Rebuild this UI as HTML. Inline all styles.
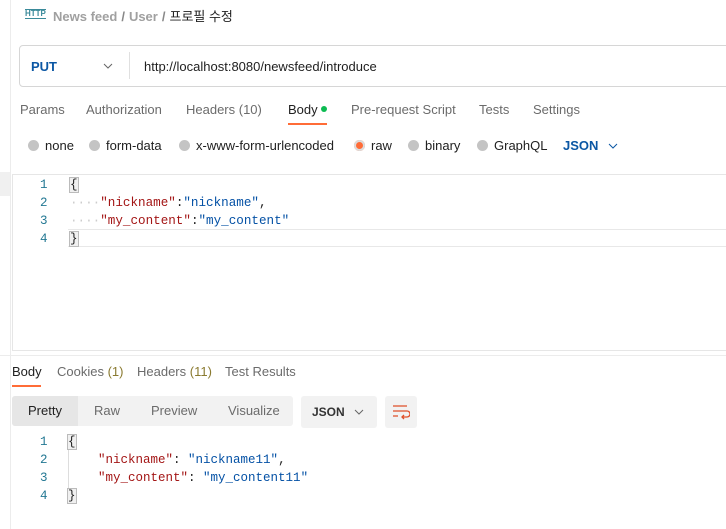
<!DOCTYPE html><html><head><style>
body{margin:0;width:726px;height:529px;background:#fff;font-family:"Liberation Sans","Noto Sans CJK KR",sans-serif;font-size:13px;color:#212121;position:relative;overflow:hidden}
.a{position:absolute;white-space:nowrap}
.g{color:#6b6b6b}
.mono{font-family:"Liberation Mono",monospace;font-size:12.5px}
.k{color:#a31515}.s{color:#0451a5}
.dot{display:inline-block;width:11px;height:11px;border-radius:50%;background:#c4c4c4;vertical-align:-1px;margin-right:6px}
.sl{color:#888;margin:0 4px}
</style></head><body>
<div class="a" style="left:0;top:0;width:10px;height:529px;border-right:1px solid #ececec"></div>
<div class="a" style="left:25px;top:9px;font-size:8px;color:#3a8a9a;font-weight:bold;border-top:1px solid #3a8a9a;border-bottom:1px solid #3a8a9a;line-height:8px">HTTP</div>
<div class="a" style="left:53px;top:6px;font-size:13px;font-weight:bold"><span style="color:#a0a0a0">News feed</span><span class="sl">/</span><span style="color:#a0a0a0">User</span><span class="sl">/</span><span style="font-weight:normal;color:#212121">프로필 수정</span></div>
<div class="a" style="left:19px;top:45px;width:720px;height:40px;border:1px solid #d6d6d6;border-radius:4px"></div>
<div class="a" style="left:31px;top:59px;color:#0b57a4;font-weight:bold">PUT</div>
<svg class="a" style="left:103px;top:63px" width="10" height="6"><path d="M1 1l4 4 4-4" stroke="#666" fill="none"/></svg>
<div class="a" style="left:129px;top:52px;width:1px;height:27px;background:#e0e0e0"></div>
<div class="a" style="left:144px;top:59px">http://localhost:8080/newsfeed/introduce</div>
<div class="a g" style="left:20px;top:102px">Params</div>
<div class="a g" style="left:86px;top:102px">Authorization</div>
<div class="a g" style="left:186px;top:102px">Headers <span>(10)</span></div>
<div class="a" style="left:288px;top:102px">Body <span style="display:inline-block;width:6px;height:6px;border-radius:50%;background:#0cbb52;vertical-align:2px"></span></div>
<div class="a" style="left:288px;top:123px;width:39px;height:2px;background:#ff6c37"></div>
<div class="a g" style="left:351px;top:102px">Pre-request Script</div>
<div class="a g" style="left:479px;top:102px">Tests</div>
<div class="a g" style="left:533px;top:102px">Settings</div>
<div class="a" style="left:28px;top:138px"><span class="dot"></span>none</div>
<div class="a" style="left:89px;top:138px"><span class="dot"></span>form-data</div>
<div class="a" style="left:179px;top:138px"><span class="dot"></span>x-www-form-urlencoded</div>
<div class="a" style="left:354px;top:138px"><span class="dot" style="background:#ff6c37;box-shadow:0 0 0 2px #ddd inset"></span>raw</div>
<div class="a" style="left:408px;top:138px"><span class="dot"></span>binary</div>
<div class="a" style="left:477px;top:138px"><span class="dot"></span>GraphQL</div>
<div class="a" style="left:563px;top:138px;color:#0b57a4;font-weight:bold">JSON</div>
<svg class="a" style="left:608px;top:143px" width="10" height="6"><path d="M1 1l4 4 4-4" stroke="#0b57a4" fill="none"/></svg>
<div class="a" style="left:0;top:172px;width:10px;height:24px;background:#f0f0f0"></div>
<div class="a" style="left:12px;top:174px;width:720px;height:175px;border-left:1px solid #e6e6e6;border-top:1px solid #e6e6e6;border-bottom:1px solid #e6e6e6"></div>
<div class="a" style="left:68px;top:229px;width:660px;height:16px;border-top:1px solid #e8e8e8;border-bottom:1px solid #e8e8e8"></div>
<div class="a mono" style="left:40px;top:176px;line-height:18px;color:#237893">1<br>2<br>3<br>4</div>
<div class="a mono" style="left:70px;top:176px;line-height:18px;font-size:12.6px"><span style="outline:1px solid #bbb;background:#f0f0f0">{</span><br><span style="color:#ccc">····</span><span class="k">"nickname"</span>:<span class="s">"nickname"</span>,<br><span style="color:#ccc">····</span><span class="k">"my_content"</span>:<span class="s">"my_content"</span><br><span style="outline:1px solid #bbb;background:#f0f0f0">}</span></div>
<div class="a" style="left:0;top:355px;width:726px;height:1px;background:#ececec"></div>
<div class="a" style="left:12px;top:364px">Body</div>
<div class="a" style="left:12px;top:385px;width:29px;height:2px;background:#ff6c37"></div>
<div class="a g" style="left:57px;top:364px">Cookies <span style="color:#8a7a30">(1)</span></div>
<div class="a g" style="left:137px;top:364px">Headers <span style="color:#8a7a30">(11)</span></div>
<div class="a g" style="left:225px;top:364px">Test Results</div>
<div class="a" style="left:12px;top:396px;width:281px;height:30px;background:#f2f2f2;border-radius:3px"></div>
<div class="a" style="left:12px;top:396px;width:66px;height:30px;background:#e6e6e6;border-radius:3px 0 0 3px"></div>
<div class="a" style="left:28px;top:403px">Pretty</div>
<div class="a g" style="left:94px;top:403px">Raw</div>
<div class="a g" style="left:151px;top:403px">Preview</div>
<div class="a g" style="left:228px;top:403px">Visualize</div>
<div class="a" style="left:301px;top:396px;width:76px;height:32px;background:#f2f2f2;border-radius:3px"></div>
<div class="a" style="left:312px;top:405px;font-size:12px;font-weight:bold;color:#333">JSON</div>
<svg class="a" style="left:354px;top:409px" width="10" height="6"><path d="M1 1l4 4 4-4" stroke="#666" fill="none"/></svg>
<div class="a" style="left:385px;top:396px;width:32px;height:32px;background:#f2f2f2;border-radius:3px"></div>
<svg class="a" style="left:392px;top:404px" width="18" height="16"><path d="M1 2h14M1 7h14a3 3 0 0 1 0 6h-5M12 11l-2 2 2 2M1 12h5" stroke="#e0502a" stroke-width="1.3" fill="none"/></svg>
<div class="a mono" style="left:40px;top:433px;line-height:18px;color:#237893">1<br>2<br>3<br>4</div>
<div class="a" style="left:68px;top:450px;width:1px;height:40px;background:#ddd"></div>
<div class="a mono" style="left:68px;top:433px;line-height:18px"><span style="outline:1px solid #bbb;background:#f0f0f0">{</span><br>&nbsp;&nbsp;&nbsp;&nbsp;<span class="k">"nickname"</span>: <span class="s">"nickname11"</span>,<br>&nbsp;&nbsp;&nbsp;&nbsp;<span class="k">"my_content"</span>: <span class="s">"my_content11"</span><br><span style="outline:1px solid #bbb;background:#f0f0f0">}</span></div>
</body></html>
